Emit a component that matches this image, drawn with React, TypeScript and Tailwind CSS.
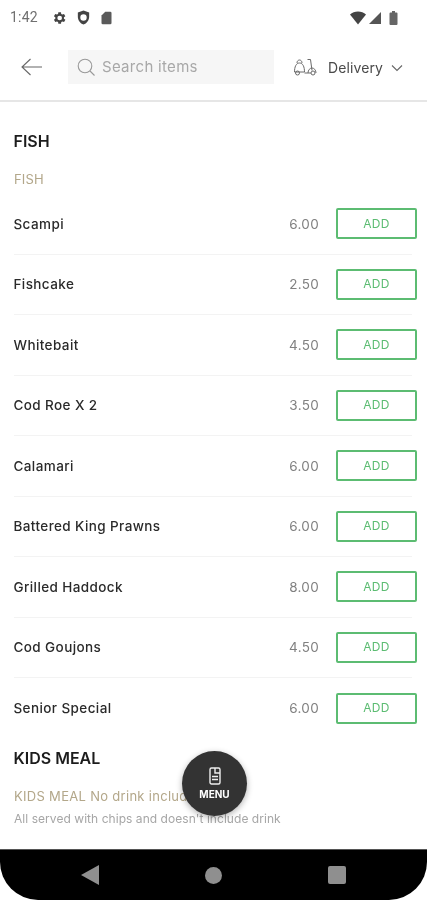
const font = { fontFamily: '"Inter", "Liberation Sans", sans-serif' };

const items = [
  ["Scampi", "6.00"],
  ["Fishcake", "2.50"],
  ["Whitebait", "4.50"],
  ["Cod Roe X 2", "3.50"],
  ["Calamari", "6.00"],
  ["Battered King Prawns", "6.00"],
  ["Grilled Haddock", "8.00"],
  ["Cod Goujons", "4.50"],
  ["Senior Special", "6.00"],
];

function StatusBar() {
  return (
    <div className="h-[35px] pl-[10px] pr-[29px] flex items-center shrink-0">
      <span className="text-[14px] tracking-[0.2px] text-[#707070] w-[41px] font-['Roboto',sans-serif]">1:42</span>
      <svg width="16" height="16" viewBox="0 0 24 24" fill="#444" className="ml-0">
        <path fillRule="evenodd" d="M19.4 13a7.5 7.5 0 0 0 0-2l2.1-1.6-2-3.5-2.5 1a7.6 7.6 0 0 0-1.7-1L15 3.2h-4l-.4 2.700a7.6 7.6 0 0 0-1.700 1l-2.500-1-2 3.500L6.500 11a7.500 7.500 0 0 0 0 2l-2.100 1.600 2 3.500 2.500-1a7.600 7.600 0 0 0 1.700 1l.4 2.700h4l.4-2.700a7.600 7.600 0 0 0 1.700-1l2.500 1 2-3.500zM13 15.500a3.500 3.500 0 1 1 0-7 3.500 3.500 0 0 1 0 7z" />
      </svg>
      <svg width="17" height="17" viewBox="0 0 24 24" fill="#444" className="ml-[8px]">
        <path fillRule="evenodd" d="M12 2 4 5v6c0 5 3.400 9.500 8 11 4.600-1.500 8-6 8-11V5zm0 14.500a4.500 4.500 0 1 1 0-9 4.500 4.500 0 0 1 0 9z" />
      </svg>
      <svg width="15" height="16" viewBox="0 0 24 24" fill="#5a5a5a" className="ml-[7px]">
        <path d="M10 2h8a2 2 0 0 1 2 2v16a2 2 0 0 1-2 2H6a2 2 0 0 1-2-2V8z" />
      </svg>
      <div className="ml-auto flex items-center gap-[3px]">
        <svg width="16" height="14" viewBox="0 0 16 14" fill="#444"><path d="M0 3.500C2 1.500 5 .5 8 .5s6 1 8 3L8 13.500z" /></svg>
        <svg width="12" height="12" viewBox="0 0 12 12" fill="#555"><path d="M12 0v12H0z" /></svg>
        <svg width="9" height="14" viewBox="0 0 9 14" fill="#666" className="ml-[5px]"><path d="M3 0h3v1.500h1.500A1 1 0 0 1 8.500 2.500V13a1 1 0 0 1-1 1h-6a1 1 0 0 1-1-1V2.500a1 1 0 0 1 1-1H3z" /></svg>
      </div>
    </div>
  );
}

function Header() {
  return (
    <div className="h-[67px] border-b-2 border-[#e6e6e6] flex items-center shrink-0 pb-[1px]">
      <svg width="24" height="20" viewBox="0 0 24 20" fill="none" stroke="#666" strokeWidth="1.100" className="ml-[20px]">
        <path d="M22 10H2M10.500 2 2 10l8.500 8" />
      </svg>
      <div className="ml-[24px] w-[206px] h-[34px] bg-[#f6f6f6] flex items-center pl-[7px]">
        <svg width="22" height="22" viewBox="0 0 22 22" fill="none" stroke="#999" strokeWidth="1.100">
          <circle cx="10" cy="10" r="6.800" />
          <path d="m15 15 4.500 4.500" />
        </svg>
        <span className="ml-[5px] pt-[1px] text-[15px] tracking-[0.3px] text-[#a8a8a8]">Search items</span>
      </div>
      <svg width="25" height="20" viewBox="0 0 25 20" fill="none" stroke="#6a6a6a" strokeWidth="1" className="ml-[19px]">
        <path d="M1.500 15c0-5 1.500-9 5-9s5 4 5 9z" />
        <path d="M4 6c0-4 5-4 5 0" />
        <circle cx="4.500" cy="16" r="2" />
        <path d="M14.500 2.500h3l1.500 11M11.500 16H18" />
        <path d="M15 16c0-3 2-5 4-5s4 2 4 5" />
        <circle cx="20" cy="16" r="2" />
      </svg>
      <span className="ml-[10px] text-[14px] tracking-[0.1px] text-[#4a4a4a]">Delivery</span>
      <svg width="12" height="8" viewBox="0 0 12 8" fill="none" stroke="#666" strokeWidth="1.100" className="ml-[8px] mt-[1px]">
        <path d="m1 1.500 5 5 5-5" />
      </svg>
    </div>
  );
}

function Row({ name, price, last }: { name: string; price: string; last: boolean }) {
  return (
    <div className={`h-[60.5px] flex items-center mr-[15px] ${last ? "" : "border-b border-[#f3f3f3]"}`}>
      <span className="text-[13.500px] tracking-[0.4px] font-medium text-[#2a2a2a] ml-[-0.5px]">{name}</span>
      <span className="ml-auto text-[13.500px] tracking-[0.3px] text-[#808080]">{price}</span>
      <button className="ml-[17px] -mr-[5px] w-[81px] h-[31px] border-2 border-[#5cbc72] rounded-[2px] text-[12px] tracking-[0.3px] text-[#5cbc72] flex items-center justify-center">
        ADD
      </button>
    </div>
  );
}

function NavBar() {
  return (
    <div className="h-[51px] bg-black rounded-b-[38px] border-t border-[#555] flex items-center justify-center gap-[106px] shrink-0 relative">
      <svg width="18" height="20" viewBox="0 0 18 20" fill="#8f8f8f"><path d="M18 0v20L0 10z" /></svg>
      <div className="w-[17px] h-[17px] rounded-full bg-[#8f8f8f]" />
      <div className="w-[18px] h-[18px] rounded-[2px] bg-[#8f8f8f]" />
    </div>
  );
}

export default function App() {
  return (
    <div style={font} className="relative w-[427px] h-[900px] bg-white overflow-hidden flex flex-col blur-[0.4px]">
      <StatusBar />
      <Header />
      <div className="flex-1 overflow-hidden pl-[14px]">
        <div className="pt-[29px] text-[16px] leading-[20px] font-semibold text-[#1c1c1c] ml-[-0.5px]">FISH</div>
        <div className="mt-[20px] text-[13px] leading-[16px] tracking-[0.2px] text-[#b3a78a]">FISH</div>
        <div className="mt-[7px]">
          {items.map(([n, p], i) => (
            <Row key={n} name={n} price={p} last={i === items.length - 1} />
          ))}
        </div>
        <div className="mt-[9px] text-[16px] leading-[20px] font-semibold text-[#1c1c1c] ml-[-0.5px]">KIDS MEAL</div>
        <div className="mt-[20px] text-[13px] leading-[16px] tracking-[0.3px] text-[#b3a78a]">KIDS MEAL No drink included</div>
        <div className="mt-[7px] text-[12px] leading-[16px] tracking-[0.05px] text-[#a6a6a6]">All served with chips and doesn't include drink</div>
      </div>
      <NavBar />
      <div className="absolute left-[182px] top-[751px] w-[65px] h-[65px] rounded-full bg-[#333333] shadow-[0_2px_6px_rgba(0,0,0,0.3)] flex flex-col items-center justify-center">
        <svg width="12" height="18" viewBox="0 0 12 18" fill="none" stroke="#eee" strokeWidth="1.400">
          <path d="M2.500 1h7A1.500 1.500 0 0 1 11 2.500v13A1.500 1.500 0 0 1 9.500 17h-7A1.500 1.500 0 0 1 1 15.500v-13A1.500 1.500 0 0 1 2.500 1z" />
          <path d="M6 1v5h5M3 9.500h6M3 12.500h6" />
        </svg>
        <span className="mt-[3px] text-[10px] leading-[12px] font-bold text-white">MENU</span>
      </div>
    </div>
  );
}
